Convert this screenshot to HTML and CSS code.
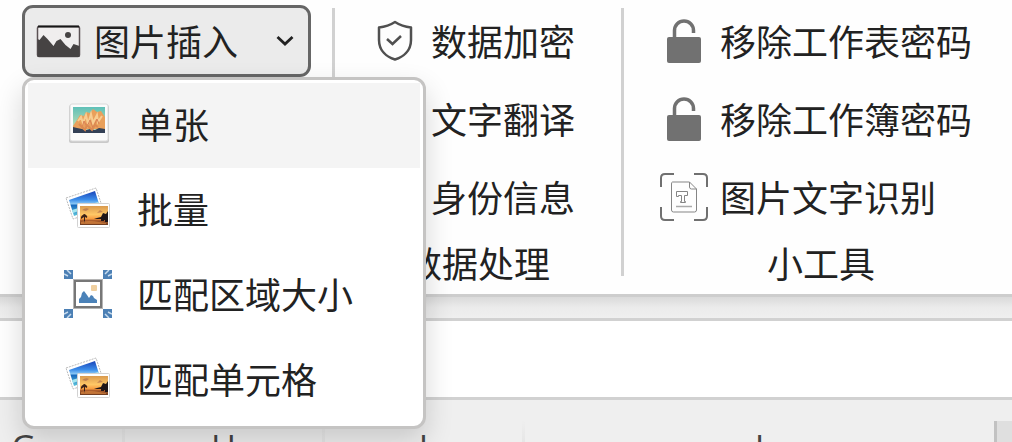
FILE: index.html
```html
<!DOCTYPE html>
<html lang="zh-CN">
<head>
  <meta charset="UTF-8">
  <title>图片插入</title>
  <link rel="stylesheet" href="styles.css">
</head>
<body>

  <!-- shared icons -->
  <svg class="sprite" aria-hidden="true">
    <defs>
      <linearGradient id="sea" x1="0" y1="0" x2="0" y2="1">
        <stop offset="0" stop-color="#1743b8"/>
        <stop offset=".35" stop-color="#3d8eea"/>
        <stop offset=".52" stop-color="#8ccaf5"/>
        <stop offset=".56" stop-color="#1768bd"/>
        <stop offset="1" stop-color="#5cc4dc"/>
      </linearGradient>
      <linearGradient id="sunset" x1="0" y1="0" x2="0" y2="1">
        <stop offset="0" stop-color="#d99a4e"/>
        <stop offset=".45" stop-color="#ffc766"/>
        <stop offset=".68" stop-color="#f79a3e"/>
        <stop offset=".75" stop-color="#b0602d"/>
        <stop offset="1" stop-color="#6b3a20"/>
      </linearGradient>
      <linearGradient id="sky" x1="0" y1="0" x2="0" y2="1">
        <stop offset="0" stop-color="#5fc0b8"/>
        <stop offset="1" stop-color="#d8e6b4"/>
      </linearGradient>
    </defs>
    <symbol id="lock" viewBox="0 0 48 48">
      <path d="M14.500 22V13.500a9.500 9.500 0 0 1 19 0V16" fill="none" stroke="#717171" stroke-width="3.500"/>
      <rect x="7" y="20" width="34" height="26" rx="2" fill="#717171"/>
    </symbol>
    <symbol id="photos" viewBox="0 -2 48 48">
      <path d="M2 11 32 1l7 21-30 10z" fill="#fff" stroke="#bbb" stroke-width="1" stroke-dasharray="2 1"/>
      <path d="M5 13 31 4l5 16-26 9z" fill="url(#sea)"/>
      <path d="M8 23l26-8 1 2-26 9z" fill="#a5e5ee"/>
      <rect x="13.500" y="16.500" width="32" height="24" rx="1" fill="#fff" stroke="#d2d2d2"/>
      <rect x="16" y="19" width="28" height="19" fill="url(#sunset)"/>
      <path d="M17 30q1-2 2-2 1-2 3 0 2 1 1 3l-2-1v6h-1v-6l-3 2z" fill="#3b2118"/>
      <path d="M44 24l-2 3-3-1-2 4-4 1-3 1h7v2h3v-1h1v2h3z" fill="#1d1519"/>
      <path d="M18 23q4-3 7-1l-3 2zM33 26l3-3 3 2z" fill="#a7644a" opacity=".6"/>
      <path d="M17 35q8-2 18 0l7 1v1H17z" fill="#d9853e" opacity=".7"/>
    </symbol>
  </svg>

  <main class="app">
    <div class="ribbon">
      <section class="group group-insert">
        <div class="dropdown">
          <button class="tool tool-open" type="button" aria-haspopup="menu" aria-expanded="true">
            <svg class="icon" viewBox="0 0 48 48">
              <rect x="3.500" y="9.500" width="42" height="30" rx="1.500" fill="#f0eeee" stroke="#5b5254" stroke-width="1.500"/>
              <path d="M3.500 22l2 1 4-5 4 4 6 7 3-5 4-2 5 6 5 4 3-5 6 2v10q0 1-1 1H4.500q-1 0-1-1z" fill="#464343"/>
              <circle cx="34" cy="18" r="3" fill="#464343"/>
              <path d="M4 9.500h41" stroke="#171717" stroke-width="2"/>
            </svg>
            <span class="label">图片插入</span>
            <svg class="chevron" viewBox="0 0 18 12"><path d="M1.500 2 9 9l7.500-7" fill="none" stroke="#222" stroke-width="2.800"/></svg>
          </button>
          <ul class="menu" role="menu">
            <li role="none"><button class="menu-item active" role="menuitem" type="button">
              <svg class="icon" viewBox="0 -1 48 48">
                <rect x="5" y="4" width="40" height="38" rx="2" fill="#c9c9c9"/>
                <rect x="6" y="3" width="38" height="37" rx="2" fill="#fbfbfb" stroke="#dadada"/>
                <rect x="9" y="6" width="32" height="26" fill="url(#sky)"/>
                <path d="M9 25l4-6 3-5 4 1 2-4 4 1 3-4 4 3 4-1 4 6v12H9z" fill="#e9a05b"/>
                <path d="M14 20l3-4 2 6 3-8 2 9 3-10 2 9 4-8 1 7 4-6" fill="none" stroke="#f8cd91" stroke-width="2"/>
                <path d="M18 27l2-7 3 6 3-7 3 8 4-9 2 5" fill="none" stroke="#d98055" stroke-width="1"/>
                <path d="M9 26l4 1 5 1 4 1 4-1 5 1 4-2 6 1v4H9z" fill="#344156"/>
                <path d="M15 23l6 6 2-5 5 5 3-5 3 2" fill="none" stroke="#dc8a52" stroke-width="2"/>
              </svg>
              <span class="label">单张</span>
            </button></li>
            <li role="none"><button class="menu-item" role="menuitem" type="button">
              <svg class="icon"><use href="#photos"/></svg>
              <span class="label">批量</span>
            </button></li>
            <li role="none"><button class="menu-item" role="menuitem" type="button">
              <svg class="icon" viewBox="0 0 48 48">
                <path d="M0 0h9v9H0zM39 0h9v9h-9zM0 39h9v9H0zM39 39h9v9h-9z" fill="#4c80b5"/>
                <path d="M0 4l4 2M3 0l4 4M48 4l-4 2M45 0l-4 4M0 44l4-2M3 48l4-4M48 44l-4-2M45 48l-4-4" stroke="#c7dbee" stroke-width="1.500"/>
                <rect x="10.500" y="10.500" width="27" height="27" fill="#fff" stroke="#b5b5b5" stroke-width="3"/>
                <rect x="11" y="11" width="26" height="26" fill="none" stroke="#777" stroke-width="2"/>
                <path d="M15 33v-4l2-2 1-4 2-2 3 4 2 3 2-3 2 1 1 2 3 2v3z" fill="#4b82b8"/>
                <rect x="27" y="15" width="6" height="6" rx="1" fill="#efcf9f"/>
              </svg>
              <span class="label">匹配区域大小</span>
            </button></li>
            <li role="none"><button class="menu-item" role="menuitem" type="button">
              <svg class="icon"><use href="#photos"/></svg>
              <span class="label">匹配单元格</span>
            </button></li>
          </ul>
        </div>
      </section>

      <div class="separator"></div>

      <section class="group">
        <button class="tool" type="button">
          <svg class="icon" viewBox="0 0 48 48">
            <path d="M24 5q7 4.500 16 5.500V23c0 11-8 17-16 19.500C16 40 8 34 8 23V10.500Q17 9.500 24 5z" fill="none" stroke="#505050" stroke-width="2.500" stroke-linejoin="round"/>
            <path d="M16 22l5.500 5 8.500-8" fill="none" stroke="#505050" stroke-width="2.500"/>
          </svg>
          <span class="label">数据加密</span>
        </button>
        <button class="tool" type="button">
          <span class="icon"></span>
          <span class="label">文字翻译</span>
        </button>
        <button class="tool" type="button">
          <span class="icon"></span>
          <span class="label">身份信息</span>
        </button>
        <div class="group-title">数据处理</div>
      </section>

      <div class="separator"></div>

      <section class="group">
        <button class="tool" type="button">
          <svg class="icon"><use href="#lock"/></svg>
          <span class="label">移除工作表密码</span>
        </button>
        <button class="tool" type="button">
          <svg class="icon"><use href="#lock"/></svg>
          <span class="label">移除工作簿密码</span>
        </button>
        <button class="tool" type="button">
          <svg class="icon" viewBox="0 0 48 48">
            <path d="M1 14V5q0-4 4-4h9M34 1h9q4 0 4 4v9M47 34v9q0 4-4 4h-9M14 47H5q-4 0-4-4v-9" fill="none" stroke="#707070" stroke-width="2"/>
            <path d="M12.500 9h17l7 7v21q0 2-2 2h-21q-2 0-2-2V11q0-2 1-2zM29.500 9v5q0 2 2 2h5" fill="none" stroke="#858585" stroke-width="1"/>
            <path d="M16.500 18.500h11v4h-3v6h1v1h-5v-1h1v-6h-3v1h-2z" fill="none" stroke="#858585" stroke-width="1"/>
            <path d="M16 33.500h16" stroke="#aaa" stroke-width="1.500"/>
          </svg>
          <span class="label">图片文字识别</span>
        </button>
        <div class="group-title">小工具</div>
      </section>
    </div>

    <div class="ribbon-shade"></div>
    <input class="formula-bar" type="text" aria-label="编辑栏">

    <div class="columns">
      <div class="column">G</div>
      <div class="column">H</div>
      <div class="column">I</div>
      <div class="column column-wide">J</div>
      <div class="column-end"></div>
    </div>
  </main>

</body>
</html>
```
FILE: styles.css
```css
* {
  box-sizing: border-box;
}

body {
  margin: 0;
  background: #efefef;
  color: #222;
  font-family: "Noto Sans CJK SC", sans-serif;
  font-size: 36px;
  line-height: 46px;
}

button {
  font: inherit;
  color: inherit;
  border: none;
  background: none;
  padding: 0;
  cursor: pointer;
}

.sprite {
  position: absolute;
  width: 0;
  height: 0;
}

.app {
  height: 100vh;
  overflow: hidden;
}

.ribbon {
  display: flex;
  align-items: flex-start;
  padding: 5px 0 9px;
  background: #fefefe;
  border-bottom: 3px solid #cdcdcd;
}

.group {
  display: flex;
  flex: none;
  flex-direction: column;
  gap: 6px;
}

.group-insert {
  padding: 0 21px 0 22px;
}

.separator {
  flex: none;
  width: 3px;
  height: 268px;
  margin-top: 3px;
  background: #d1d1d1;
}

.tool {
  display: flex;
  align-items: center;
  gap: 12px;
  height: 72px;
  padding: 0 46px 0 36px;
  white-space: nowrap;
}

.tool-open {
  padding: 0 14px 0 9px;
  border: 3px solid #666;
  border-radius: 11px;
  background: #ebebeb;
}

.icon {
  flex: none;
  width: 48px;
  height: 48px;
}

.label {
  padding-bottom: 2px;
}

.chevron {
  width: 18px;
  height: 12px;
  margin-left: 26px;
}

.group-title {
  text-align: center;
}

/* dropdown */
.dropdown {
  position: relative;
}

.menu {
  position: absolute;
  top: 72px;
  left: 0;
  z-index: 1;
  width: 404px;
  margin: 0;
  padding: 3px;
  list-style: none;
  background: #fff;
  border: 3px solid #c5c4c3;
  border-radius: 12px;
  box-shadow: 0 12px 28px rgba(0, 0, 0, 0.16);
}

.menu-item {
  display: flex;
  align-items: center;
  gap: 25px;
  width: 100%;
  height: 85px;
  padding: 0 0 4px 36px;
}

.menu-item.active,
.menu-item:hover {
  background: #f4f4f4;
}

/* sheet */
.ribbon-shade {
  height: 21px;
  background: linear-gradient(#dadada, #ebebeb 50%, #efefef);
}

.formula-bar {
  display: block;
  width: 100%;
  height: 82px;
  padding: 0 24px;
  font: inherit;
  border: solid #d1d1d1;
  border-width: 3px 0;
  border-radius: 0;
  background: #fff;
}

.columns {
  display: flex;
  height: 84px;
  margin-left: -78px;
  padding-top: 21px;
  color: #444;
  font-family: "Open Sans", sans-serif;
  font-size: 34px;
  line-height: 52px;
}

.column {
  flex: none;
  width: 200px;
  border-left: 3px solid;
  border-image: linear-gradient(#efefef, #d4d4d4) 1;
  text-align: center;
}

.column-wide {
  width: 472px;
}

.column-end {
  flex: 1;
  border-left: 3px solid #c2c2c2;
  background: #dfdfdf;
}
```
